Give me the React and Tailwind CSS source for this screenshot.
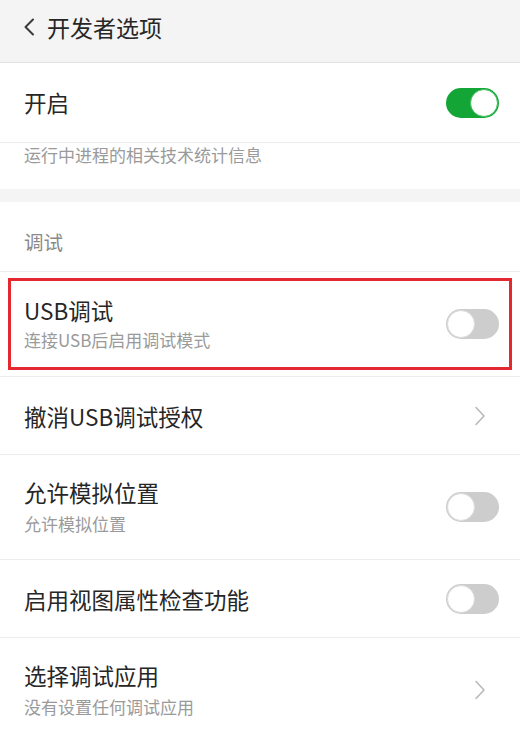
import React from "react";

const font = { fontFamily: '"Noto Sans CJK SC", "Noto Sans", sans-serif' };

function Toggle({ on }) {
  if (on) {
    return (
      <div className="w-[53px] h-[30px] rounded-full bg-[#14a537] flex items-center justify-end pr-[1px] shrink-0">
        <div className="w-[28px] h-[28px] rounded-full bg-white border border-[#3fbf5a]" />
      </div>
    );
  }
  return (
    <div className="w-[53px] h-[30px] rounded-full bg-[#cdcdcd] flex items-center justify-start pl-[1px] shrink-0">
      <div className="w-[28px] h-[28px] rounded-full bg-white border border-[#dcdcdc]" />
    </div>
  );
}

function Chevron() {
  return (
    <svg width="12" height="20" viewBox="0 0 12 20" className="shrink-0 mr-[13px]">
      <path d="M2 1.5 L10 10 L2 18.5" fill="none" stroke="#b9b9b9" strokeWidth="1.6" strokeLinecap="round" strokeLinejoin="round" />
    </svg>
  );
}

function Row({ title, sub, right, h }) {
  return (
    <div className={`flex items-center justify-between pl-6 pr-[21px] border-b border-[#ececec] ${h}`}>
      <div className="flex flex-col">
        <div className="text-[22.5px] leading-[30px] text-[#262626]">{title}</div>
        {sub && <div className="text-[17px] leading-[26px] mt-[4px] text-[#9a9a9a]">{sub}</div>}
      </div>
      {right}
    </div>
  );
}

export default function App() {
  return (
    <div style={font} className="w-[520px] h-[732px] bg-white overflow-hidden flex flex-col">
      <div className="h-[63px] bg-[#f4f4f4] border-b border-[#e2e2e2] flex items-center pl-[23px] pb-[8px] shrink-0">
        <svg width="12" height="18" viewBox="0 0 12 18" className="mr-[12px]">
          <path d="M10 1.5 L2.5 9 L10 16.5" fill="none" stroke="#3a3a3a" strokeWidth="2" strokeLinecap="round" strokeLinejoin="round" />
        </svg>
        <span className="text-[23px] text-[#262626]">开发者选项</span>
      </div>

      <div className="h-[80px] flex items-center justify-between pl-6 pr-[21px] border-b border-[#ececec] shrink-0">
        <span className="text-[22.5px] text-[#262626]">开启</span>
        <Toggle on />
      </div>
      <div className="h-[46px] pl-6 pt-[0px] shrink-0">
        <span className="text-[17px] leading-[24px] text-[#9a9a9a]">运行中进程的相关技术统计信息</span>
      </div>
      <div className="h-[13px] bg-[#f4f4f4] shrink-0" />

      <div className="h-[70px] flex items-center pl-6 pt-[10px] border-b border-[#ececec] shrink-0">
        <span className="text-[19.5px] text-[#8a8a8a]">调试</span>
      </div>

      <div className="h-[105px] py-[6px] px-[8px] border-b border-[#ececec] shrink-0">
        <div className="h-full border-[3px] border-[#e3282f] flex items-center justify-between pl-[13px] pr-[10px]">
          <div className="flex flex-col">
            <div className="text-[22.5px] leading-[30px] text-[#262626]">USB调试</div>
            <div className="text-[17px] leading-[26px] mt-[2px] text-[#9a9a9a]">连接USB后启用调试模式</div>
          </div>
          <Toggle on={false} />
        </div>
      </div>

      <Row h="h-[78px] shrink-0" title="撤消USB调试授权" right={<Chevron />} />
      <Row h="h-[105px] shrink-0" title="允许模拟位置" sub="允许模拟位置" right={<Toggle on={false} />} />
      <Row h="h-[78px] shrink-0" title="启用视图属性检查功能" right={<Toggle on={false} />} />
      <div className="flex items-center justify-between pl-6 pr-[21px] pt-[22px]">
        <div className="flex flex-col">
          <div className="text-[22.5px] leading-[30px] text-[#262626]">选择调试应用</div>
          <div className="text-[17px] leading-[26px] mt-[4px] text-[#9a9a9a]">没有设置任何调试应用</div>
        </div>
        <Chevron />
      </div>
    </div>
  );
}
